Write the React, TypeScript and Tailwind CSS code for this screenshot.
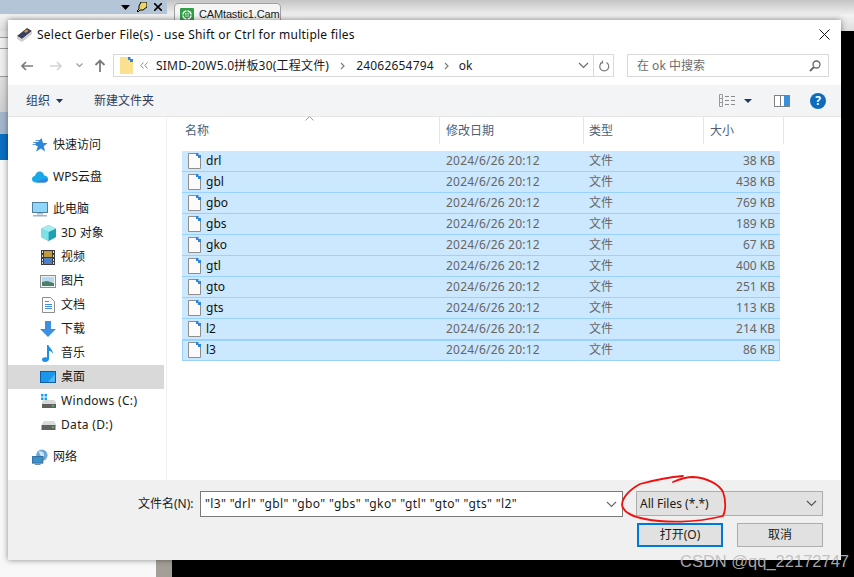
import React from "react";

const FileIcon = () => (
  <svg width="13" height="16" viewBox="0 0 13 16" className="shrink-0">
    <path d="M0.5 0.5H8.5L12.5 4.5V15.5H0.5Z" fill="#fbfbfb" stroke="#8e8e8e" />
    <path d="M8 0H10.5V2H13V5H10V3H8Z" fill="#2f86d8" />
  </svg>
);

const rows = [
  ["drl", "38 KB"],
  ["gbl", "438 KB"],
  ["gbo", "769 KB"],
  ["gbs", "189 KB"],
  ["gko", "67 KB"],
  ["gtl", "400 KB"],
  ["gto", "251 KB"],
  ["gts", "113 KB"],
  ["l2", "214 KB"],
  ["l3", "86 KB"],
];

const Chevron = ({ c = "#6b6b6b" }: { c?: string }) => (
  <svg width="11" height="7" viewBox="0 0 11 7"><path d="M1 1L5.5 5.5L10 1" fill="none" stroke={c} strokeWidth="1.2" /></svg>
);

const icons: Record<string, React.ReactNode> = {
  star: (
    <svg width="16" height="16" viewBox="0 0 16 16"><path d="M9.500 1L11 6H15.500L11.800 9.200L13 14.500L9 11.400L4 14.500L5.800 9.500L3 7.800H0.500V7H4L3 5.800H1V5H6L7 4H3.500V3.300H7.500Z" fill="#2f86d8" /></svg>
  ),
  cloud: (
    <svg width="16" height="12" viewBox="0 0 16 12"><path d="M4 11.500C1.500 11.500 0 10 0 8C0 6 1.500 5 3 5C3.500 2 6 0 8.500 0.500C11 1 12 3 12 4.500C14.500 4.500 16 6 16 8C16 10 14.500 11.500 12.500 11.500Z" fill="#18a8ea" /><path d="M4 11.500C7 10 9 8 16 8C16 10 14.500 11.500 12.500 11.500Z" fill="#3a7fe0" /></svg>
  ),
  pc: (
    <svg width="16" height="15" viewBox="0 0 16 15"><rect x="0.500" y="0.500" width="15" height="10" fill="#8fd6f8" stroke="#4f7f9f" /><rect x="5" y="11" width="6" height="1.500" fill="#a9bccb" /><rect x="1" y="13" width="14" height="1.500" fill="#9fb4c5" /></svg>
  ),
  cube: (
    <svg width="15" height="16" viewBox="0 0 15 16"><path d="M7.500 0L15 3.500V12L7.500 16L0 12V3.500Z" fill="#49c4d4" /><path d="M7.500 7L15 3.500V12L7.500 16Z" fill="#1f9fb5" /><path d="M7.500 0L15 3.500L7.500 7L0 3.500Z" fill="#a4ecf0" /><path d="M0 3.500L7.500 7V16L0 12Z" fill="#7fe0e6" /></svg>
  ),
  film: (
    <svg width="14" height="15" viewBox="0 0 14 15"><rect width="14" height="15" fill="#3c3c3c" /><rect x="3" y="1" width="8" height="6" fill="#c29a3b" /><rect x="3" y="8" width="8" height="6" fill="#4f7fc7" /><path d="M1 1h1v2H1zM1 5h1v2H1zM1 9h1v2H1zM1 12h1v2H1zM12 1h1v2h-1zM12 5h1v2h-1zM12 9h1v2h-1zM12 12h1v2h-1z" fill="#ddd" /></svg>
  ),
  pic: (
    <svg width="16" height="13" viewBox="0 0 16 13"><rect x="0.500" y="0.500" width="15" height="12" fill="#eef4f8" stroke="#8f8f8f" /><rect x="2" y="2" width="12" height="5" fill="#b9d8ee" /><path d="M2 7L7 6L14 8V11H2Z" fill="#4c7f68" /></svg>
  ),
  doc: (
    <svg width="13" height="16" viewBox="0 0 13 16"><path d="M0.500 0.500H8.500L12.500 4.500V15.500H0.500Z" fill="#fbfbfb" stroke="#8e8e8e" /><path d="M3 4h4v1H3zM3 7h7v1H3zM3 9h7v1H3zM3 11h7v1H3z" fill="#3f8fd8" /></svg>
  ),
  down: (
    <svg width="16" height="16" viewBox="0 0 16 16"><path d="M5 0H11V8H16L8 16L0 8H5Z" fill="#3d8fe0" /></svg>
  ),
  music: (
    <svg width="12" height="17" viewBox="0 0 12 17"><path d="M5 0H6.500C7 3 11 4 11 9C10 6.500 8 6 7 6V14C7 16 5 17 3 17C1 17 0 16 0 14.500C0 13 2 12 5 12.500Z" fill="#1f8fe6" /></svg>
  ),
  desk: (
    <svg width="16" height="12" viewBox="0 0 16 12"><rect x="0.500" y="0.500" width="15" height="11" fill="#1a97ec" stroke="#0d5fa8" /><path d="M8 11L15 3V11Z" fill="#4fb6f4" /></svg>
  ),
  win: (
    <svg width="15" height="14" viewBox="0 0 15 14"><path d="M0 0h2.500v2.500H0zM3.500 0H6v2.500H3.500zM0 3.500h2.500V6H0zM3.500 3.500H6V6H3.500z" fill="#19a0ea" /><path d="M1 8L3 6H13L15 8V13H1Z" fill="#d8d8d8" /><rect x="1" y="10" width="14" height="4" fill="#606060" /><rect x="11" y="11" width="2" height="1.500" fill="#3cd070" /></svg>
  ),
  drive: (
    <svg width="15" height="9" viewBox="0 0 15 9"><path d="M1 3L3 0H13L15 3V5H1Z" fill="#dadada" /><rect x="0.500" y="4" width="14" height="5" fill="#606060" /><rect x="11" y="5.500" width="2" height="1.500" fill="#3cd070" /></svg>
  ),
  net: (
    <svg width="17" height="17" viewBox="0 0 17 17"><circle cx="10.500" cy="6" r="6" fill="#6fa8d8" /><path d="M7 2C10 1 13 3 13 7L10 8Z" fill="#cfe6f6" /><rect x="0.500" y="7.500" width="11" height="7" fill="#3d8fc8" stroke="#2d6f9f" /><rect x="3" y="15" width="6" height="1.500" fill="#6f93ad" /></svg>
  ),
};

const Nav = ({ icon, label, sub, selected, gap, wide }: { icon: string; label: string; sub?: boolean; selected?: boolean; gap?: boolean; wide?: boolean }) => (
  <div className={`flex h-6 items-center ${gap ? "mt-2" : ""} ${selected ? "bg-[#d9d9d9]" : ""}`}>
    <div className={`flex items-center justify-center ${sub ? "ml-[32px] w-[16px] mr-[5px]" : "ml-[24px] w-[16px] mr-[5px]"}`}>{icons[icon]}</div>
    <span className={`whitespace-nowrap text-[#1a1a1a] ${wide ? "tracking-[0.33px]" : ""}`}>{label}</span>
  </div>
);

export default function App() {
  return (
    <div className="relative h-[577px] w-[854px] overflow-hidden bg-black font-['Noto_Sans','Noto_Sans_CJK_SC',sans-serif] text-[12px] leading-none">
      {/* application behind the dialog */}
      <div className="flex h-[31px] bg-gradient-to-b from-[#c4c4c4] via-[#f2f2f2] to-[#dcdcdc]">
        <div className="flex h-[14px] w-[167px] items-center justify-end gap-[7px] bg-[#b3c5d6] pr-[5px]">
          <svg width="9" height="5" viewBox="0 0 9 5"><path d="M0 0H9L4.500 5Z" fill="#000" /></svg>
          <svg width="10" height="10" viewBox="0 0 10 10"><path d="M4 0H10V5L6 8H3L1 10L0 9L2 7V4Z" fill="#e8d66c" stroke="#000" strokeWidth="1" /></svg>
          <svg width="8" height="8" viewBox="0 0 8 8"><path d="M0 0L8 8M8 0L0 8" stroke="#000" strokeWidth="1.600" /></svg>
        </div>
        <div className="ml-[7px] mt-[3px] flex h-[23px] w-[107px] items-center gap-[5px] self-start rounded-t-sm border border-[#a0a0a0] bg-[#f5f5f5] pl-[5px]">
          <svg width="14" height="14" viewBox="0 0 13 13" className="shrink-0"><rect width="13" height="13" rx="1" fill="#2f9f46" /><circle cx="6.500" cy="6.500" r="4.500" fill="#fff" /><circle cx="6.500" cy="6.500" r="2.500" fill="none" stroke="#2f9f46" /><path d="M6 1h1v11H6zM1 6h11v1H1z" fill="#2f9f46" /></svg>
          <span className="whitespace-nowrap font-['Liberation_Sans',sans-serif] text-[11px] tracking-[-0.15px] text-[#1a1a1a]">CAMtastic1.Cam</span>
        </div>
      </div>
      <div className="flex h-[546px]">
        <div className="flex h-full w-[172px]">
          <div className="flex h-full w-[156px] flex-col bg-[#f8f8f8]">
            <div className="h-[6px] bg-[#e4e4e4]" />
            <div className="h-[11px] border-t border-[#9a9a9a] bg-[#eeeeee]" />
            <div className="h-[28px] border-t border-[#9a9a9a] bg-[#eeeeee]" />
            <div className="h-[36px] border-t border-[#9a9a9a] bg-gradient-to-b from-[#dedede] to-[#cfcfcf]" />
            <div className="h-[22px] bg-[#a3b6cd]" />
            <div className="h-[26px] bg-[#0a6fc2]" />
          </div>
          <div className="h-full w-[16px] bg-[#a39f96]" />
        </div>
      </div>

      {/* the dialog */}
      <div className="absolute left-[8px] top-[20px] flex h-[540px] w-[833px] flex-col bg-white shadow-[0_0_6px_rgba(0,0,0,0.45)]">
        <div className="flex h-[26px] items-center pl-[8px] pr-[11px] pt-[3px]">
          <svg width="17" height="15" viewBox="0 0 17 15" className="mr-[4px]"><path d="M1 9L11 1L16 4L6 12Z" fill="#39415e" /><path d="M1 9L6 12L16 4V7L6 15L1 12Z" fill="#cfcfcf" /><path d="M8 4L11 2.500L12.500 4L9.500 6Z" fill="#d8953b" /></svg>
          <span className="whitespace-nowrap tracking-[0.24px] text-[#101010]">Select Gerber File(s) - use Shift or Ctrl for multiple files</span>
          <svg width="11" height="11" viewBox="0 0 11 11" className="ml-auto"><path d="M0.500 0.500L10.500 10.500M10.500 0.500L0.500 10.500" stroke="#111" /></svg>
        </div>
        <div className="flex h-[39px] items-center pl-[13px] pr-[12px]">
          <svg width="12" height="10" viewBox="0 0 12 10"><path d="M12 5H1M5 1L1 5L5 9" fill="none" stroke="#7c7c7c" strokeWidth="1.700" /></svg>
          <svg width="12" height="10" viewBox="0 0 12 10" className="ml-[17px]"><path d="M0 5H11M7 1L11 5L7 9" fill="none" stroke="#d4d4d4" strokeWidth="1.700" /></svg>
          <svg width="7" height="5" viewBox="0 0 7 5" className="ml-[14px]"><path d="M0.500 0.500L3.500 3.500L6.500 0.500" fill="none" stroke="#9a9a9a" strokeWidth="1.200" /></svg>
          <svg width="12" height="13" viewBox="0 0 12 13" className="ml-[11px]"><path d="M6 13V2M1.500 6L6 1.500L10.500 6" fill="none" stroke="#7c7c7c" strokeWidth="1.800" /></svg>
          <div className="ml-[7px] flex h-[23px] w-[501px] items-center border border-[#d9d9d9] pl-[6px]">
            <svg width="13" height="17" viewBox="0 0 13 17" className="shrink-0"><path d="M0 0H8L13 5V17H0Z" fill="#fbe18f" /><path d="M8 0H10.500V2H13V5H10V3H8Z" fill="#2f86d8" /></svg>
            <svg width="8" height="7" viewBox="0 0 8 7" className="ml-[7px] shrink-0"><path d="M3.500 0.500L0.800 3.500L3.500 6.500M7.500 0.500L4.800 3.500L7.500 6.500" fill="none" stroke="#8a8a8a" /></svg>
            <span className="ml-[8px] whitespace-nowrap tracking-[0.2px] text-[#1a1a1a]">SIMD-20W5.0拼板30(工程文件)</span>
            <svg width="5" height="8" viewBox="0 0 5 8" className="ml-[11px] shrink-0"><path d="M1 1L4 4L1 7" fill="none" stroke="#7c7c7c" strokeWidth="1.200" /></svg>
            <span className="ml-[11px] tracking-[0.2px] text-[#1a1a1a]">24062654794</span>
            <svg width="5" height="8" viewBox="0 0 5 8" className="ml-[10px] shrink-0"><path d="M1 1L4 4L1 7" fill="none" stroke="#7c7c7c" strokeWidth="1.200" /></svg>
            <span className="ml-[10px] text-[#1a1a1a]">ok</span>
            <div className="ml-auto flex h-full items-center">
              <Chevron />
              <div className="ml-[4px] flex h-full w-[20px] items-center justify-center border-l border-[#d9d9d9]">
                <svg width="12" height="12" viewBox="0 0 12 12"><path d="M4 2.500A4.500 4.500 0 1 0 8.500 2.500M4.500 0.500V3H2" fill="none" stroke="#7c7c7c" strokeWidth="1.200" /></svg>
              </div>
            </div>
          </div>
          <div className="ml-auto flex h-[23px] w-[202px] items-center border border-[#d9d9d9] pl-[9px] pr-[7px] text-[#6d6d6d]">
            <span>在 ok 中搜索</span>
            <svg width="12" height="12" viewBox="0 0 12 12" className="ml-auto"><circle cx="7.500" cy="4.500" r="3.500" fill="none" stroke="#666" strokeWidth="1.300" /><path d="M5 7L1 11" stroke="#666" strokeWidth="1.800" /></svg>
          </div>
        </div>
        <div className="flex h-[32px] items-center border-b border-[#e6e6e6] bg-[#f3f4f6] pl-[18px] pr-[15px] text-[#2a4060]">
          <span>组织</span>
          <svg width="7" height="4" viewBox="0 0 7 4" className="ml-[6px]"><path d="M0 0H7L3.500 4Z" fill="#1f3a5f" /></svg>
          <span className="ml-[31px]">新建文件夹</span>
          <svg width="16" height="13" viewBox="0 0 16 13" className="ml-auto"><path d="M0.500 0.500h3v12h-3zM0.500 4.500h3M0.500 8.500h3" fill="none" stroke="#9a9a9a" /><path d="M6 2h4v1H6zM12 2h4v1h-4zM6 6h4v1H6zM12 6h4v1h-4zM6 10h4v1H6zM12 10h4v1h-4z" fill="#8a8a8a" /></svg>
          <svg width="8" height="4" viewBox="0 0 8 4" className="ml-[9px]"><path d="M0 0H8L4 4Z" fill="#1f3a5f" /></svg>
          <svg width="16" height="12" viewBox="0 0 16 12" className="ml-[22px]"><rect x="0.500" y="0.500" width="15" height="11" fill="#fff" stroke="#808080" /><rect x="10" y="1" width="5" height="10" fill="#3b8fdc" /><rect x="6" y="1" width="1" height="10" fill="#808080" /></svg>
          <div className="ml-[20px] flex h-[16px] w-[16px] items-center justify-center rounded-full bg-[#0f6cbd] text-[12px] font-bold text-white">?</div>
        </div>

        <div className="flex min-h-0 flex-1">
          <div className="h-full w-[159px] shrink-0 border-r border-[#f0f0f0] pt-[16px]">
            <div className="mr-[2px] flex flex-col">
              <Nav icon="star" label="快速访问" />
              <Nav icon="cloud" label="WPS云盘" gap />
              <Nav icon="pc" label="此电脑" gap />
              <Nav icon="cube" label="3D 对象" sub />
              <Nav icon="film" label="视频" sub />
              <Nav icon="pic" label="图片" sub />
              <Nav icon="doc" label="文档" sub />
              <Nav icon="down" label="下载" sub />
              <Nav icon="music" label="音乐" sub />
              <Nav icon="desk" label="桌面" sub selected />
              <Nav icon="win" label="Windows (C:)" sub wide />
              <Nav icon="drive" label="Data (D:)" sub wide />
              <Nav icon="net" label="网络" gap />
            </div>
          </div>
          <div className="min-w-0 flex-1 pl-[15px]">
            <div className="relative flex h-[27px] w-[602px] items-center text-[#4c607a]">
              <div className="flex h-full w-[258px] items-center border-r border-[#e5e5e5] pl-[3px]">名称</div>
              <div className="flex h-full w-[144px] items-center border-r border-[#e5e5e5] pl-[6px]">修改日期</div>
              <div className="flex h-full w-[120px] items-center border-r border-[#e5e5e5] pl-[5px]">类型</div>
              <div className="flex h-full w-[80px] items-center border-r border-[#e5e5e5] pl-[6px]">大小</div>
              <svg width="9" height="5" viewBox="0 0 9 5" className="absolute left-[123px] top-[-1px]"><path d="M0.500 4.500L4.500 0.500L8.500 4.500" fill="none" stroke="#9a9a9a" /></svg>
            </div>
            <div className="mt-[7px] w-[598px]">
              {rows.map(([name, size], i) => (
                <div key={name} className={`flex h-[21px] items-center border-b border-[#99d1ff] bg-[#cce8ff] ${i === 9 ? "outline outline-1 -outline-offset-1 outline-[#99d1ff]" : ""}`}>
                  <div className="ml-[6px] mr-[5px]"><FileIcon /></div>
                  <span className="w-[240px] text-[#101010]">{name}</span>
                  <span className="w-[143px] whitespace-nowrap tracking-[0.2px] text-[#666]">2024/6/26 20:12</span>
                  <span className="w-[60px] text-[#666]">文件</span>
                  <span className="w-[126px] text-right text-[#666]">{size}</span>
                </div>
              ))}
            </div>
          </div>
        </div>

        <div className="flex h-[80px] shrink-0 flex-col bg-[#f0f0f0] pl-[130px] pr-[18px] pt-[11px]">
          <div className="flex items-start">
            <span className="flex h-[26px] w-[62px] items-center whitespace-nowrap text-[#1a1a1a]">文件名(N):</span>
            <div className="flex h-[26px] w-[423px] items-center border border-[#7a7a7a] bg-white pl-[4px] pr-[5px]">
              <span className="whitespace-nowrap tracking-[0.38px] text-[#1a1a1a]">"l3" "drl" "gbl" "gbo" "gbs" "gko" "gtl" "gto" "gts" "l2"</span>
              <div className="ml-auto"><Chevron /></div>
            </div>
            <div className="ml-[13px] flex h-[25px] flex-1 items-center border border-[#adadad] bg-[#e1e1e1] px-[3px] pr-[5px]">
              <span className="text-[#1a1a1a]">All Files (*.*)</span>
              <div className="ml-auto"><Chevron c="#555" /></div>
            </div>
          </div>
          <div className="mt-[6px] flex justify-end gap-[14px]">
            <div className="flex h-[24px] w-[86px] items-center justify-center border-2 border-[#0078d7] bg-[#e1e1e1] text-[#1a1a1a]">打开(O)</div>
            <div className="flex h-[24px] w-[86px] items-center justify-center border border-[#adadad] bg-[#e1e1e1] text-[#1a1a1a]">取消</div>
          </div>
        </div>
      </div>

      {/* hand-drawn red mark */}
      <svg width="130" height="60" viewBox="0 0 130 60" className="absolute left-[615px] top-[470px]">
        <path d="M68 6C55 7 40 10 25 14C14 20 7 28 7 35C8 42 18 47 30 49C50 53 80 53 108 46C111 40 111 30 108 22C104 14 92 8 78 7C72 7 65 9 58 12" fill="none" stroke="#ee1111" strokeWidth="1.800" strokeLinecap="round" />
      </svg>
      <div className="absolute left-[680px] top-[552px] whitespace-nowrap font-['Liberation_Sans',sans-serif] text-[16.500px] leading-[18px] text-[#bdbdbd]/90">CSDN @qq_22172747</div>
    </div>
  );
}
